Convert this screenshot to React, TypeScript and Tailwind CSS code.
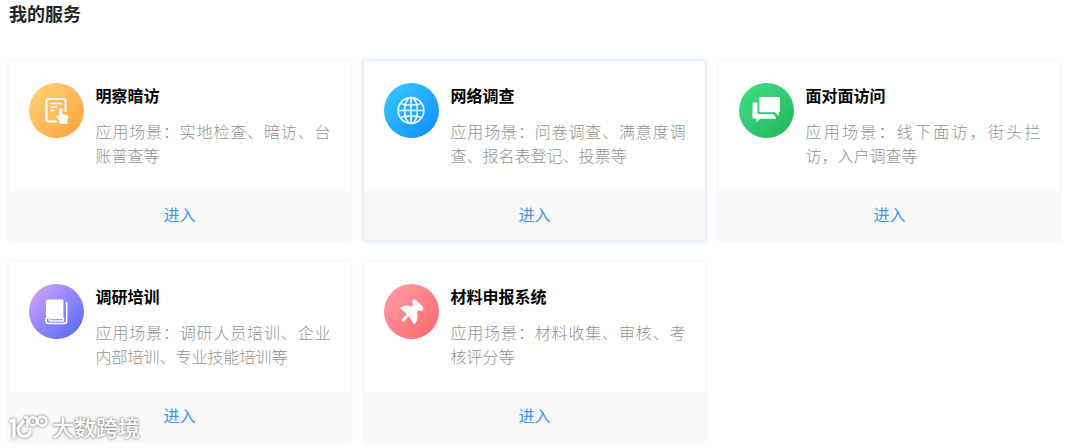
import type { ReactNode } from "react";

type Service = {
  title: string;
  desc: string;
  color: string;
  active?: boolean;
  icon: ReactNode;
};

const services: Service[] = [
  {
    title: "明察暗访",
    desc: "应用场景：实地检查、暗访、台账普查等",
    color: "from-[#ffd479] to-[#ff9f3a]",
    icon: (
      <>
        <path
          d="M28 38.500H19.500a2 2 0 0 1-2-2V18a2 2 0 0 1 2-2H34.500a2 2 0 0 1 2 2V29"
          fill="none"
          stroke="#fff"
          strokeWidth="2"
        />
        <path d="M21 20.500h12M21 24h7M21 27.500h4.500" stroke="#fff" strokeWidth="1.500" />
        <path
          d="M30.200 26.500a1.700 1.700 0 0 1 3.400 0v4.800l4 .6c1.200.2 1.800.9 1.600 2.100L38.300 38v2.800h-8.100V38L27.300 33.500c-.4-1 .9-1.800 1.700-1.100l1.200.9z"
          fill="#fff"
        />
      </>
    ),
  },
  {
    title: "网络调查",
    desc: "应用场景：问卷调查、满意度调查、报名表登记、投票等",
    color: "from-[#3dcbfd] to-[#1389ff]",
    active: true,
    icon: (
      <g fill="none" stroke="#e4f6ff" strokeWidth="1.700">
        <circle cx="27" cy="27.500" r="12.800" />
        <ellipse cx="27" cy="27.500" rx="6.500" ry="12.800" />
        <path d="M27 14.700v25.600M14.200 27.500h25.600M16.500 20.500c6 2.300 15 2.300 21 0M16.500 34.500c6-2.300 15-2.300 21 0" />
      </g>
    ),
  },
  {
    title: "面对面访问",
    desc: "应用场景：线下面访，街头拦访，入户调查等",
    color: "from-[#43e08a] to-[#1fb457]",
    icon: (
      <g fill="#fff">
        <path d="M21.500 14h18.300a1.200 1.200 0 0 1 1.200 1.200V28a1.200 1.200 0 0 1-1.200 1.200V33l-4-3.800H21.500a1.200 1.200 0 0 1-1.200-1.200V15.200a1.200 1.200 0 0 1 1.200-1.200z" />
        <path d="M14.700 19.500h3.800v10.200c0 .8.600 1.400 1.400 1.400H34l3 3.400v1.200H21L17.500 39.500v-3.800h-2.800a1.200 1.200 0 0 1-1.200-1.200V20.700a1.200 1.200 0 0 1 1.200-1.200z" />
      </g>
    ),
  },
  {
    title: "调研培训",
    desc: "应用场景：调研人员培训、企业内部培训、专业技能培训等",
    color: "from-[#d8a4fb] to-[#4b63f3]",
    icon: (
      <>
        <path d="M18.500 15.500h14.700a1.200 1.200 0 0 1 1.200 1.200v17.300H20.500l-3.500 1.500V17a1.500 1.500 0 0 1 1.500-1.500z" fill="#fff" />
        <path
          d="M17 34v2.500a3 3 0 0 0 3 3h15.200a2.500 2.500 0 0 0 2.500-2.500V18M34.500 34.500H21.200a1.200 1.200 0 0 0 0 2.400H34.500z"
          fill="none"
          stroke="#fff"
          strokeWidth="1.500"
        />
      </>
    ),
  },
  {
    title: "材料申报系统",
    desc: "应用场景：材料收集、审核、考核评分等",
    color: "from-[#ff9ea9] to-[#fc6467]",
    icon: (
      <g fill="#fff" stroke="#fff" strokeLinecap="round" strokeLinejoin="round">
        <path d="M30.500 18l6.500 6.500" strokeWidth="4.600" />
        <path d="M24.500 30.500l-5.300 5.500" strokeWidth="2.800" />
        <path
          d="M31 20.500l-3.500 2.700c-3.500-1.500-7.500-1.200-10.700.8l5.500 4.700 3.200 3.300 4.700 7.500c2.500-3 3.500-7.200 2-11.500l2.800-3.500z"
          strokeWidth="1.400"
        />
      </g>
    ),
  },
];

function ServiceCard({ service }: { service: Service }) {
  return (
    <div
      className={
        service.active
          ? "h-[179px] bg-white shadow-[0_0_4px_1px_#d5dffb]"
          : "h-[179px] bg-white shadow-[0_0_4px_1px_#eff3fd]"
      }
    >
      <div className="flex h-[130px] pt-[22px] pl-5">
        <div className={`size-[55px] shrink-0 rounded-full bg-linear-to-br ${service.color}`}>
          <svg viewBox="0 0 55 55" className="size-full">
            {service.icon}
          </svg>
        </div>
        <div className="ml-[11.500px] w-[235px]">
          <h3 className="text-base leading-6 font-bold text-black">{service.title}</h3>
          <p className="mt-[11.500px] text-justify text-base leading-[24.500px] font-light text-[#929292]">
            {service.desc}
          </p>
        </div>
      </div>
      <a
        href="#"
        className="flex h-[49px] items-center justify-center bg-[#f9f9fa] pb-[3px] text-base text-[#3e94f3]"
      >
        进入
      </a>
    </div>
  );
}

function Watermark() {
  return (
    <div className="absolute top-[410px] left-2 flex h-8 items-center text-white">
      <svg
        viewBox="0 0 42 32"
        className="h-8 w-[42px] drop-shadow-[0_0_1.500px_#666]"
        fill="none"
        stroke="currentColor"
        strokeWidth="3.200"
      >
        <path d="M2 11.500l4-1.500V28.500M16 10.500L10 18c0 5 2.500 8.500 6 8.500 3.500 0 5.500-2 6.500-5.500" />
        <path d="M16 7.500h3.300v9" strokeWidth="2.400" />
        <circle cx="25" cy="11.300" r="4" strokeWidth="2.400" />
        <circle cx="34" cy="11.300" r="4.500" strokeWidth="2.400" />
      </svg>
      <span className="ml-0.5 text-[22px] leading-8 font-medium [text-shadow:0_0_2px_#777,0_0_3px_#999]">大数跨境</span>
    </div>
  );
}

export default function App() {
  return (
    <div
      lang="zh-CN"
      className="relative h-[448px] w-[1080px] overflow-hidden bg-white pl-[9px] font-['Noto_Sans_CJK_SC',sans-serif]"
    >
      <h2 className="h-[61px] text-lg leading-[27px] font-bold text-[#252525]">我的服务</h2>
      <div className="grid grid-cols-[341px_341px_341px] gap-x-3.5 gap-y-[22px]">
        {services.map((s) => (
          <ServiceCard key={s.title} service={s} />
        ))}
      </div>
      <Watermark />
    </div>
  );
}
